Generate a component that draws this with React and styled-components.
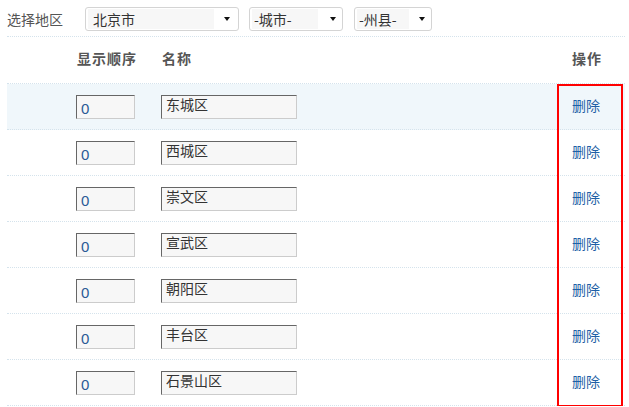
import React from "react";
import styled, { createGlobalStyle } from "styled-components";

const GlobalStyle = createGlobalStyle`
  body {
    margin: 0;
    background: #fff;
    font-family: "Noto Sans CJK SC", "Liberation Sans", sans-serif;
    font-size: 14px;
    color: #444;
  }
`;

const Page = styled.div`
  width: 629px;
  padding-left: 7px;
  box-sizing: border-box;
`;

const FilterBar = styled.div`
  display: flex;
  align-items: center;
  width: 618px;
  height: 37px;
  padding-top: 2px;
  box-sizing: border-box;
  border-bottom: 1px dotted #d5e3ec;
`;

const Label = styled.span`
  width: 78px;
  color: #555;
  font-size: 14px;
  line-height: 16px;
`;

const Select = styled.div`
  position: relative;
  display: flex;
  align-items: center;
  width: ${(p) => p.$width}px;
  height: 24px;
  margin-right: ${(p) => p.$gap || 0}px;
  border: 1px solid #d4d4d4;
  border-radius: 3px;
  box-sizing: border-box;
  background: #fff;
`;

const SelectText = styled.span`
  width: ${(p) => p.$width}px;
  height: 20px;
  margin-left: 2px;
  padding-left: ${(p) => p.$pad}px;
  box-sizing: border-box;
  background: #f7f7f7;
  color: #333;
  font-size: 14px;
  line-height: 20px;
`;

const Arrow = styled.span`
  position: absolute;
  right: ${(p) => p.$right}px;
  top: 9px;
  width: 0;
  height: 0;
  border-left: 3.5px solid transparent;
  border-right: 3.5px solid transparent;
  border-top: 4px solid #111;
`;

const Table = styled.div`
  width: 618px;
`;

const Row = styled.div`
  display: grid;
  grid-template-columns: 69px 85px 1fr 68px;
  align-items: center;
  height: ${(p) => (p.$head ? 47 : 46)}px;
  box-sizing: border-box;
  border-bottom: 1px dotted #d5e3ec;
  background: ${(p) => (p.$active ? "#f0f7fb" : "transparent")};
`;

const HeadCell = styled.div`
  font-weight: bold;
  font-size: 14px;
  color: #555;
  letter-spacing: 1px;
  padding-left: ${(p) => p.$pad || 0}px;
  padding-bottom: 5px;
`;

const Body = styled.div`
  position: relative;
`;

const Input = styled.div`
  height: 24px;
  width: ${(p) => p.$width}px;
  box-sizing: border-box;
  border: 1px solid #ccc;
  border-top-color: #666;
  border-left-color: #666;
  background: #f7f7f7;
  font-size: ${(p) => (p.$num ? 15 : 14)}px;
  color: ${(p) => (p.$num ? "#2a5b96" : "#333")};
  font-family: ${(p) =>
    p.$num ? '"Liberation Sans", Arial, sans-serif' : "inherit"};
  line-height: ${(p) => (p.$num ? "25px" : "17px")};
  padding-left: 4px;
`;

const DeleteLink = styled.a`
  color: #1f5fa6;
  font-size: 14px;
  text-decoration: none;
  padding-left: 15px;
  padding-bottom: 3px;
  cursor: pointer;
`;

const Highlight = styled.div`
  position: absolute;
  top: 0;
  bottom: -1px;
  right: 2px;
  width: 66px;
  border: 2px solid #ff0000;
  box-sizing: border-box;
  pointer-events: none;
`;

const districts = ["东城区", "西城区", "崇文区", "宣武区", "朝阳区", "丰台区", "石景山区"];

export default function App() {
  return (
    <Page>
      <GlobalStyle />
      <FilterBar>
        <Label>选择地区</Label>
        <Select $width={154} $gap={10}>
          <SelectText $width={126} $pad={5}>北京市</SelectText>
          <Arrow $right={8} />
        </Select>
        <Select $width={94} $gap={11}>
          <SelectText $width={66} $pad={2}>-城市-</SelectText>
          <Arrow $right={6} />
        </Select>
        <Select $width={78}>
          <SelectText $width={52} $pad={2}>-州县-</SelectText>
          <Arrow $right={6} />
        </Select>
      </FilterBar>
      <Table>
        <Row $head>
          <div />
          <HeadCell $pad={1}>显示顺序</HeadCell>
          <HeadCell $pad={1}>名称</HeadCell>
          <HeadCell $pad={15}>操作</HeadCell>
        </Row>
        <Body>
          {districts.map((name, i) => (
            <Row key={name} $active={i === 0}>
              <div />
              <Input $num $width={59}>0</Input>
              <Input $width={136}>{name}</Input>
              <DeleteLink>删除</DeleteLink>
            </Row>
          ))}
          <Highlight />
        </Body>
      </Table>
    </Page>
  );
}
